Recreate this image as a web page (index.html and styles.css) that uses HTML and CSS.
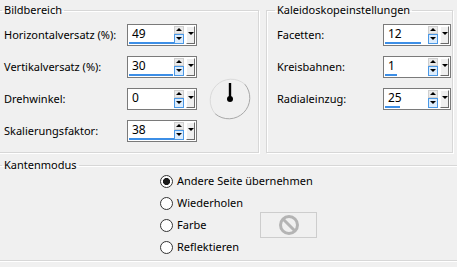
FILE: index.html
```html
<!DOCTYPE html>
<html>
<head>
<meta charset="utf-8">
<link rel="stylesheet" href="styles.css">
</head>
<body>
<div class="top">
  <fieldset class="group g-left">
    <legend>Bildbereich</legend>
    <div class="rows rows-left">
      <span class="lbl">Horizontalversatz (%):</span>
      <div class="spin spin-l"><div class="field"><span class="val">49</span><span class="bar" style="width:51px"></span></div><div class="arrows"><span class="up"></span><span class="dn"></span></div><span class="drop"></span></div>
      <span class="lbl">Vertikalversatz (%):</span>
      <div class="spin spin-l"><div class="field"><span class="val">30</span><span class="bar" style="width:44px"></span></div><div class="arrows"><span class="up"></span><span class="dn"></span></div><span class="drop"></span></div>
      <div class="dial">
        <svg width="44" height="44" viewBox="0 0 44 44">
          <path d="M7.2 36.8 A21 21 0 0 1 36.8 7.2" fill="none" stroke="#dadada" stroke-width="1"/>
          <path d="M36.8 7.2 A21 21 0 0 1 7.2 36.8" fill="none" stroke="#a8a8a8" stroke-width="1"/>
          <line x1="22" y1="6" x2="22" y2="21" stroke="#000" stroke-width="2.4"/>
          <circle cx="22" cy="22" r="3" fill="#000"/>
        </svg>
      </div>
      <span class="lbl">Drehwinkel:</span>
      <div class="spin spin-l"><div class="field"><span class="val">0</span></div><div class="arrows"><span class="up"></span><span class="dn"></span></div><span class="drop"></span></div>
      <span class="lbl">Skalierungsfaktor:</span>
      <div class="spin spin-l"><div class="field"><span class="val">38</span><span class="bar" style="width:48px"></span></div><div class="arrows"><span class="up"></span><span class="dn"></span></div><span class="drop"></span></div>
    </div>
  </fieldset>
  <fieldset class="group g-right">
    <legend>Kaleidoskopeinstellungen</legend>
    <div class="rows rows-right">
      <span class="lbl">Facetten:</span>
      <div class="spin spin-r"><div class="field"><span class="val">12</span><span class="bar" style="width:36px"></span></div><div class="arrows"><span class="up"></span><span class="dn"></span></div><span class="drop"></span></div>
      <span class="lbl">Kreisbahnen:</span>
      <div class="spin spin-r"><div class="field"><span class="val">1</span><span class="bar" style="width:12px"></span></div><div class="arrows"><span class="up"></span><span class="dn"></span></div><span class="drop"></span></div>
      <span class="lbl">Radialeinzug:</span>
      <div class="spin spin-r"><div class="field"><span class="val">25</span><span class="bar" style="width:15px"></span></div><div class="arrows"><span class="up"></span><span class="dn"></span></div><span class="drop"></span></div>
    </div>
  </fieldset>
</div>
<fieldset class="group g-bottom">
  <legend>Kantenmodus</legend>
  <div class="radios">
    <label class="radio r-wide"><span class="dot on"></span>Andere Seite übernehmen</label>
    <label class="radio"><span class="dot"></span>Wiederholen</label>
    <label class="radio"><span class="dot"></span>Farbe</label>
    <div class="colorbox">
      <svg width="22" height="22" viewBox="0 0 22 22">
        <circle cx="11" cy="11" r="8.5" fill="none" stroke="#b4b4b4" stroke-width="3"/>
        <line x1="5" y1="5" x2="17" y2="17" stroke="#b4b4b4" stroke-width="3"/>
      </svg>
    </div>
    <label class="radio"><span class="dot"></span>Reflektieren</label>
  </div>
</fieldset>
</body>
</html>
```
FILE: styles.css
```css
html, body {
  margin: 0;
  padding: 0;
}
body {
  background: #f0f0f0;
  font-family: "Noto Sans", "Open Sans", sans-serif;
  font-size: 11px;
  color: #000;
  width: 457px;
  height: 267px;
  overflow: hidden;
}
.top {
  display: flex;
  align-items: flex-start;
  padding-top: 3px;
}
.group {
  margin: 0;
  padding: 0;
  border: 1px solid #d7d7d7;
  box-shadow: inset 1px 1px 0 #fff, 1px 1px 0 #fff;
  box-sizing: border-box;
  min-width: 0;
}
.group legend {
  padding: 0 2px;
  margin-left: 8px;
  line-height: 14px;
  height: 14px;
}
.g-left {
  margin-left: -7px;
  width: 266px;
  height: 150px;
}
.g-right {
  margin-left: 7px;
  width: 187px;
  height: 150px;
}
.rows {
  display: grid;
  grid-auto-rows: 22px;
  row-gap: 10px;
  padding-top: 7px;
  padding-left: 10px;
  align-items: center;
}
.rows-left {
  grid-template-columns: 123px 70px 55px;
}
.rows-right {
  grid-template-columns: 106px 68px;
}
.lbl {
  grid-column: 1;
  white-space: nowrap;
  line-height: 16px;
}
.dial {
  grid-column: 3;
  grid-row: 2 / 5;
  align-self: center;
  justify-self: end;
  width: 44px;
  height: 44px;
}
.dial svg {
  display: block;
}
.spin {
  grid-column: 2;
  display: flex;
  height: 22px;
  box-sizing: border-box;
  border: 1px solid #7a7a7a;
  background: #fff;
}
.field {
  flex: 1;
  display: flex;
  flex-direction: column;
  min-width: 0;
}
.val {
  padding-left: 4px;
  line-height: 16px;
  padding-top: 1px;
  font-size: 12px;
}
.bar {
  display: block;
  margin-top: auto;
  margin-left: 1px;
  margin-bottom: 1px;
  height: 3px;
  background: #3c8ee6;
}
.arrows {
  width: 10px;
  display: flex;
  flex-direction: column;
  margin: 1px 1px 1px 0;
}
.up, .dn {
  position: relative;
  box-sizing: border-box;
  display: block;
}
.up {
  height: 8px;
  background: #eaeaea;
  border: 1px solid #cfcfcf;
}
.dn {
  height: 10px;
  background: #dcecfc;
  border: 1px solid #4a98e6;
}
.up::after, .dn::after, .drop::after {
  content: "";
  position: absolute;
  left: 50%;
  width: 0;
  height: 0;
  border-left: 3px solid transparent;
  border-right: 3px solid transparent;
  margin-left: -3px;
}
.up::after {
  top: 1px;
  border-bottom: 3px solid #000;
}
.dn::after {
  top: 2px;
  border-top: 3px solid #000;
}
.drop {
  position: relative;
  display: block;
  width: 9px;
  margin: 1px;
  box-sizing: border-box;
  background: #efefef;
  border-top: 1px solid #fff;
  border-left: 1px solid #fff;
  border-right: 1px solid #6a6a6a;
  border-bottom: 1px solid #6a6a6a;
}
.drop::after {
  top: 5px;
  border-top: 3px solid #000;
}
.g-bottom {
  margin-left: -7px;
  margin-top: 5px;
  width: 480px;
  height: 103px;
}
.radios {
  display: grid;
  grid-template-columns: 100px auto;
  grid-auto-rows: 22px;
  margin-top: -2px;
  padding-left: 166px;
  align-items: center;
}
.radio {
  display: flex;
  align-items: center;
  white-space: nowrap;
  grid-column: 1;
  line-height: 16px;
}
.r-wide {
  grid-column: 1 / 3;
}
.dot {
  width: 13px;
  height: 13px;
  box-sizing: border-box;
  border: 1px solid #333;
  border-radius: 50%;
  background: #fff;
  margin-right: 4px;
  flex: none;
}
.dot.on {
  background: radial-gradient(circle, #1a1a1a 0 3.3px, #fff 3.8px);
}
.colorbox {
  grid-column: 2;
  grid-row: 3;
  width: 57px;
  height: 26px;
  box-sizing: border-box;
  border: 1px solid #cdcdcd;
  background: #f0f0f0;
  display: flex;
  align-items: center;
  justify-content: center;
}
.colorbox svg {
  display: block;
}
```
